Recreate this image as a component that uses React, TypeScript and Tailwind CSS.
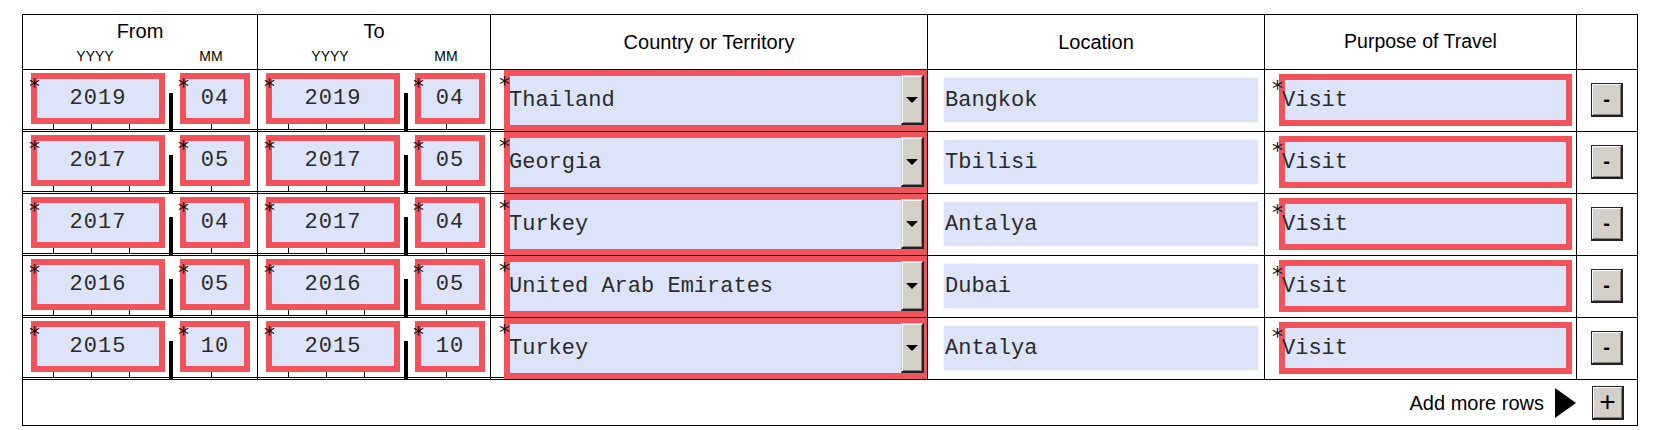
const rows = [
  { fy: '2019', fm: '04', ty: '2019', tm: '04', country: 'Thailand', location: 'Bangkok', purpose: 'Visit' },
  { fy: '2017', fm: '05', ty: '2017', tm: '05', country: 'Georgia', location: 'Tbilisi', purpose: 'Visit' },
  { fy: '2017', fm: '04', ty: '2017', tm: '04', country: 'Turkey', location: 'Antalya', purpose: 'Visit' },
  { fy: '2016', fm: '05', ty: '2016', tm: '05', country: 'United Arab Emirates', location: 'Dubai', purpose: 'Visit' },
  { fy: '2015', fm: '10', ty: '2015', tm: '10', country: 'Turkey', location: 'Antalya', purpose: 'Visit' },
]

const mono = "font-['Liberation_Mono','Courier_New',monospace]"

function Star({ className }: { className: string }) {
  return (
    <span className={`absolute z-10 font-['DejaVu_Sans',sans-serif] text-[22px] leading-none text-[#111] ${className}`}>*</span>
  )
}

function YearBox({ value }: { value: string }) {
  return (
    <div className="relative mt-[3px] h-[51px] w-[134px] border-[6px] border-[#f0535b] bg-[#dde4f9]">
      <Star className="-left-[8px] -top-[3px]" />
      <div className={`flex h-full items-center justify-center text-[22px] tracking-[1px] text-[#2a2a2a] ${mono}`}>{value}</div>
      <div className="absolute left-[-6px] top-[calc(100%+6px)] flex gap-[37px] pl-[22px]">
        <div className="h-[6px] w-px bg-black" />
        <div className="h-[6px] w-px bg-black" />
        <div className="h-[6px] w-px bg-black" />
      </div>
    </div>
  )
}

function MonthBox({ value }: { value: string }) {
  return (
    <div className="relative ml-[7px] mt-[3px] h-[51px] w-[70px] border-[6px] border-[#f0535b] bg-[#dde4f9]">
      <Star className="-left-[8px] -top-[3px]" />
      <div className={`flex h-full items-center justify-center text-[22px] tracking-[1px] text-[#2a2a2a] ${mono}`}>{value}</div>
      <div className="absolute left-[25px] top-[calc(100%+6px)] h-[6px] w-px bg-black" />
    </div>
  )
}

function DateCell({ year, month, width }: { year: string; month: string; width: string }) {
  return (
    <div className={`flex h-full shrink-0 items-start border-r border-black pl-[8px] shadow-[inset_0_-1px_0_0_#fff,inset_0_-2px_0_0_#000] ${width}`}>
      <YearBox value={year} />
      <div className="relative z-10 ml-[4px] mt-[23px] h-[39px] w-[4px] bg-black" />
      <MonthBox value={month} />
    </div>
  )
}

function WinButton({ children }: { children: React.ReactNode }) {
  return (
    <div className="flex h-[34px] w-[32px] items-center justify-center border border-r-2 border-b-2 border-[#222] bg-[#d4d0c8] shadow-[inset_1px_1px_0_#ffffff,inset_-1px_-1px_0_#808080] font-['Liberation_Sans',Arial,sans-serif] text-black">
      {children}
    </div>
  )
}

function DateHeader({ title, width }: { title: string; width: string }) {
  return (
    <div className={`flex h-full shrink-0 flex-col border-r border-black ${width}`}>
      <div className="pt-[6px] text-center text-[20px] leading-[20px]">{title}</div>
      <div className="mt-[8px] flex pl-[8px] text-[14px] leading-[14px]">
        <span className="w-[128px] text-center">YYYY</span>
        <span className="w-[17px]" />
        <span className="w-[70px] text-center">MM</span>
      </div>
    </div>
  )
}

export default function App() {
  return (
    <div className="min-h-[430px] bg-white pl-[22px] pt-[14px] font-['Liberation_Sans',Arial,sans-serif] text-black">
      <div className="w-[1616px] border-l border-t border-black">
        <div className="flex h-[55px] border-b border-black">
          <DateHeader title="From" width="w-[235px]" />
          <DateHeader title="To" width="w-[233px]" />
          <div className="flex w-[437px] shrink-0 items-center justify-center border-r border-black text-[20px]">
            Country or Territory
          </div>
          <div className="flex w-[337px] shrink-0 items-center justify-center border-r border-black text-[20px]">
            Location
          </div>
          <div className="flex w-[312px] shrink-0 items-center justify-center border-r border-black text-[19.5px]">
            Purpose of Travel
          </div>
          <div className="w-[61px] shrink-0 border-r border-black" />
        </div>

        {rows.map((r, i) => (
          <div key={i} className="flex h-[62px] border-b border-black">
            <DateCell year={r.fy} month={r.fm} width="w-[235px]" />
            <DateCell year={r.ty} month={r.tm} width="w-[233px]" />

            <div className="relative flex h-full w-[437px] shrink-0 border-r border-black pl-[13px] shadow-[inset_0_-1px_0_0_#fff,inset_0_-2px_0_0_#000]">
              <Star className="left-[8px] top-[4px]" />
              <div className="flex h-[61px] flex-1 border-[6px] border-r-[3px] border-[#f0535b] bg-[#dde4f9]">
                <div className={`flex flex-1 items-center pb-[1px] text-[22px] text-[#2a2a2a] ${mono}`}>
                  <span className="-ml-[1px]">{r.country}</span>
                </div>
                <div className="-mt-[1px] flex h-[50px] w-[23px] items-center justify-center border border-r-2 border-b-2 border-[#222] border-t-[#d4d0c8] border-l-[#d4d0c8] bg-[#d4d0c8] shadow-[inset_1px_1px_0_#ffffff,inset_-1px_-1px_0_#808080]">
                  <div className="h-0 w-0 border-x-[6px] border-t-[6px] border-x-transparent border-t-black" />
                </div>
              </div>
            </div>

            <div className="flex h-full w-[337px] shrink-0 items-start border-r border-black pl-[16px] pr-[6px] pt-[8px]">
              <div className={`flex h-[44px] flex-1 items-center bg-[#dde4f9] pl-[1px] text-[22px] text-[#2a2a2a] shadow-[0_0_2px_#dde4f9] ${mono}`}>
                {r.location}
              </div>
            </div>

            <div className="relative flex h-full w-[312px] shrink-0 items-start border-r border-black pl-[14px] pt-[4px]">
              <Star className="left-[7px] top-[8px]" />
              <div className={`flex h-[52px] w-[293px] items-center border-[6px] border-[#f0535b] bg-[#dde4f9] text-[22px] text-[#2a2a2a] ${mono}`}>
                <span className="-ml-[3px]">{r.purpose}</span>
              </div>
            </div>

            <div className="flex h-full w-[61px] shrink-0 items-center justify-center border-r border-black pb-[2px]">
              <WinButton>
                <span className="text-[20px] font-bold leading-none">-</span>
              </WinButton>
            </div>
          </div>
        ))}

        <div className="flex h-[46px] items-center justify-end border-b border-r border-black pr-[13px]">
          <span className="text-[20px]">Add more rows</span>
          <div className="ml-[11px] h-0 w-0 border-y-[15px] border-l-[21px] border-y-transparent border-l-black" />
          <div className="ml-[16px]">
            <WinButton>
              <span className="text-[28px] leading-none">+</span>
            </WinButton>
          </div>
        </div>
      </div>
    </div>
  )
}
